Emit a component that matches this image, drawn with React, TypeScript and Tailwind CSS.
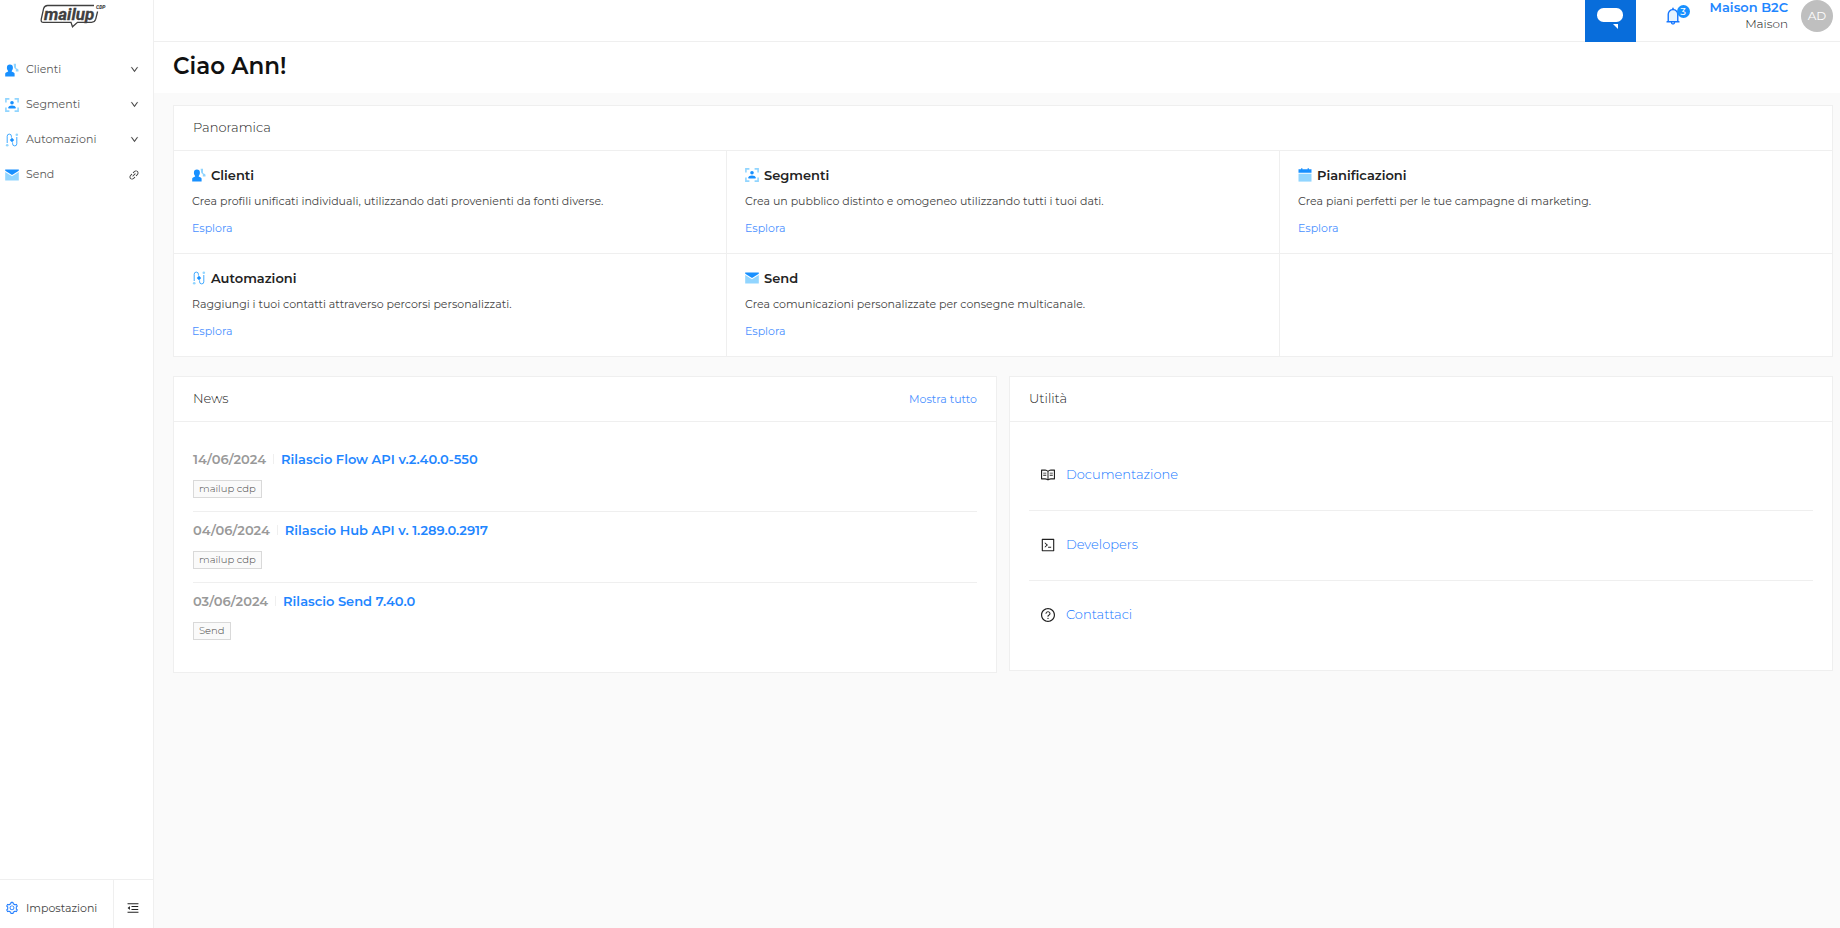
import type { ReactNode } from 'react';
import {
  AiOutlineCode,
  AiOutlineDown,
  AiOutlineLink,
  AiOutlineMenuFold,
  AiOutlineQuestionCircle,
  AiOutlineRead,
  AiOutlineSetting,
  AiTwotoneBell,
} from 'react-icons/ai';

const ClientiIcon = () => (
  <svg viewBox="0 0 14 14" className="w-3.5 h-3.5 shrink-0">
    <path d="M8.6 .8H11v3.6c0 .6.3 1 .8 1.2l1 .3c.5.2.7.5.7 1V8.600h-2.700V6.200L9.300 5z" fill="#91d5ff" />
    <path d="M4.900 1.600a3 3.200 0 0 1 3 3.200c0 1.400-.5 2.500-1.200 3.100v.7l2 .8c.6.200.9.7.9 1.300v2.800H.2v-2.800c0-.6.3-1.100.9-1.300l2-.8v-.7c-.7-.6-1.200-1.700-1.200-3.100a3 3.200 0 0 1 3-3.200z" fill="#1890ff" />
  </svg>
);

const SegmentiIcon = () => (
  <svg viewBox="0 0 14 14" className="w-3.5 h-3.5 shrink-0">
    <path d="M.9 4.400V.9h3.500M9.600.9h3.500v3.500M13.100 9.600v3.500H9.600M4.400 13.100H.9V9.600" fill="none" stroke="#91d5ff" strokeWidth="1.600" />
    <circle cx="7" cy="4.800" r="1.800" fill="#1890ff" />
    <path d="M3.400 10.400V9.300c0-1 1.600-1.900 3.600-1.900s3.600.9 3.600 1.900v1.100z" fill="#1890ff" />
  </svg>
);

const AutomazioniIcon = () => (
  <svg viewBox="0 0 14 14" className="w-3.5 h-3.5 shrink-0">
    <path d="M2.200 10V3.200a2.100 2.100 0 0 1 4.200 0V4.600" fill="none" stroke="#40a9ff" strokeWidth="1" />
    <path d="M11.800 4v6.800a2.100 2.100 0 0 1-4.200 0V9.400" fill="none" stroke="#40a9ff" strokeWidth="1" />
    <path d="M7 4.800 9.200 7 7 9.200 4.800 7z" fill="#1890ff" />
    <circle cx="2.200" cy="12.200" r="1.300" fill="#91d5ff" />
    <circle cx="11.800" cy="1.800" r="1.300" fill="#91d5ff" />
  </svg>
);

const SendIcon = () => (
  <svg viewBox="0 0 14 14" className="w-3.5 h-3.5 shrink-0">
    <path d="M.2 4 7 8.200l6.800-4.200v8.600H.2z" fill="#91d5ff" />
    <path d="M.2 1.400h13.600v1.300L7 6.900.2 2.700z" fill="#1890ff" />
  </svg>
);

const PianificazioniIcon = () => (
  <svg viewBox="0 0 14 14" className="w-3.5 h-3.5 shrink-0">
    <path d="M.5 1.300h2.600V.3h1.300v1h5.200v-1h1.300v1h2.600v3.400H.5z" fill="#1890ff" />
    <path d="M.5 5.700h13v7.900H.5z" fill="#91d5ff" />
  </svg>
);

const Logo = () => (
  <svg viewBox="0 0 70 26" className="w-[70px] h-[26px]" aria-label="mailup cdp">
    <path
      d="M56 2.500H9.500C7 2.500 6.200 3.600 5.600 5.600L3.300 16C2.800 18.300 3.400 19.300 5.600 19.300H33L34.500 23.800L39.500 19.300H53.500C56 19.300 57.100 18.400 57.700 16.200L59.600 8.500"
      fill="none"
      stroke="#404040"
      strokeWidth="1.3"
    />
    <text x="6" y="17" fill="#404040" stroke="#404040" strokeWidth="0.3" className="font-['Roboto',sans-serif] text-[17px] font-bold italic">
      mailup
    </text>
    <text x="58" y="6" fill="#404040" className="font-['Roboto',sans-serif] text-[5px] font-black italic">
      CDP
    </text>
  </svg>
);

const menu = [
  { label: 'Clienti', icon: <ClientiIcon /> },
  { label: 'Segmenti', icon: <SegmentiIcon /> },
  { label: 'Automazioni', icon: <AutomazioniIcon /> },
  { label: 'Send', icon: <SendIcon />, external: true },
];

const features = [
  { title: 'Clienti', icon: <ClientiIcon />, text: 'Crea profili unificati individuali, utilizzando dati provenienti da fonti diverse.' },
  { title: 'Segmenti', icon: <SegmentiIcon />, text: 'Crea un pubblico distinto e omogeneo utilizzando tutti i tuoi dati.' },
  { title: 'Pianificazioni', icon: <PianificazioniIcon />, text: 'Crea piani perfetti per le tue campagne di marketing.' },
  { title: 'Automazioni', icon: <AutomazioniIcon />, text: 'Raggiungi i tuoi contatti attraverso percorsi personalizzati.' },
  { title: 'Send', icon: <SendIcon />, text: 'Crea comunicazioni personalizzate per consegne multicanale.' },
];

const news = [
  { date: '14/06/2024', title: 'Rilascio Flow API v.2.40.0-550', tag: 'mailup cdp' },
  { date: '04/06/2024', title: 'Rilascio Hub API v. 1.289.0.2917', tag: 'mailup cdp' },
  { date: '03/06/2024', title: 'Rilascio Send 7.40.0', tag: 'Send' },
];

const links = [
  { label: 'Documentazione', icon: <AiOutlineRead /> },
  { label: 'Developers', icon: <AiOutlineCode /> },
  { label: 'Contattaci', icon: <AiOutlineQuestionCircle /> },
];

const Card = ({ title, extra, children }: { title: string; extra?: ReactNode; children: ReactNode }) => (
  <section className="bg-white border border-[#efefef]">
    <div className="flex items-center justify-between h-[45px] px-[19px] border-b border-[#efefef]">
      <h2 className="text-[13px] font-light text-[#222]">{title}</h2>
      {extra}
    </div>
    {children}
  </section>
);

const Sidebar = () => (
  <aside className="flex flex-col w-[154px] shrink-0 bg-white border-r border-[#efefef]">
    <a href="#" className="flex justify-center pt-[3px] mr-2">
      <Logo />
    </a>
    <nav className="flex flex-col pt-[23px]">
      {menu.map((item) => (
        <button key={item.label} className="flex items-center h-[35px] pl-[5px] pr-3 text-[11px] text-[#595959]">
          {item.icon}
          <span className="ml-[7px] flex-1 text-left">{item.label}</span>
          <span className="flex justify-center w-3.5 text-[#333]">
            {item.external ? (
              <AiOutlineLink className="w-3 h-3" />
            ) : (
              <AiOutlineDown className="w-[9px] h-[9px]" stroke="currentColor" strokeWidth="30" />
            )}
          </span>
        </button>
      ))}
    </nav>
    <div className="flex h-[49px] mt-auto border-t border-[#efefef]">
      <button className="flex flex-1 items-center pl-[5px] pt-2 text-[11px] text-[#444]">
        <AiOutlineSetting className="w-3.5 h-3.5 text-[#1677ff]" />
        <span className="ml-[7px]">Impostazioni</span>
      </button>
      <button aria-label="Comprimi menu" className="flex w-10 items-center justify-center pt-2 pr-0.5 border-l border-[#efefef]">
        <AiOutlineMenuFold className="w-3.5 h-3.5 text-[#222]" />
      </button>
    </div>
  </aside>
);

const Header = () => (
  <header className="flex justify-end h-[42px] pr-[7px] bg-white border-b border-[#efefef]">
    <button aria-label="Chat" className="flex justify-center w-[51px] h-[42px] pt-2 bg-[#086ddb]">
      <svg viewBox="0 0 26 22" className="w-[26px] h-[22px]">
        <rect width="26" height="14" rx="6.500" fill="#fff" />
        <path d="M16 16h5v5z" fill="#fff" />
      </svg>
    </button>
    <button aria-label="Notifiche" className="relative flex w-[27px] h-8 pt-1.5 ml-[27px]">
      <AiTwotoneBell className="w-5 h-5 text-[#1677ff] [&>path[fill]]:fill-[#e6f4ff]" />
      <span className="absolute top-[5px] right-0 flex items-center justify-center w-[13px] h-[13px] rounded-full bg-[#1890ff] text-[10px] font-medium text-white">
        3
      </span>
    </button>
    <div className="ml-5 text-right">
      <div className="text-[13px] leading-[14px] font-semibold text-[#1f86ff]">Maison B2C</div>
      <div className="text-xs leading-5 font-light text-[#111]">Maison</div>
    </div>
    <div className="flex items-center justify-center w-8 h-8 ml-[13px] rounded-full bg-[#bfbfbf] text-xs text-white">AD</div>
  </header>
);

const App = () => {
  return (
    <div className="flex min-h-screen bg-[#fafafa] font-['Montserrat','Inter',sans-serif]">
      <Sidebar />
      <div className="flex flex-col flex-1 min-w-0">
        <Header />
        <div className="h-[51px] pl-[19px] bg-white">
          <h1 className="pt-1 text-[23px] leading-10 font-semibold text-[#111]">Ciao Ann!</h1>
        </div>
        <main className="flex flex-col gap-[19px] pt-3 pl-[19px] pr-[7px]">
          <Card title="Panoramica">
            <div className="grid grid-cols-3 gap-px bg-[#efefef]">
              {features.map((f) => (
                <div key={f.title} className="h-[102px] px-[18px] pt-[15px] bg-white">
                  <div className="flex items-center gap-[5px]">
                    {f.icon}
                    <h3 className="text-[13px] leading-[18px] font-semibold text-[#222]">{f.title}</h3>
                  </div>
                  <p className="mt-2 text-[11px] leading-[18px] text-[#444]">{f.text}</p>
                  <a href="#" className="block mt-[9px] text-[11px] leading-[18px] text-[#4a90ff]">
                    Esplora
                  </a>
                </div>
              ))}
              <div className="bg-white" />
            </div>
          </Card>

          <div className="grid grid-cols-2 items-start gap-3">
            <Card title="News" extra={<a href="#" className="text-[11px] text-[#4a90ff]">Mostra tutto</a>}>
              <ul className="mx-[19px] pt-[19px] pb-[18px] divide-y divide-[#efefef]">
                {news.map((n) => (
                  <li key={n.date} className="h-[71px] pt-[9px]">
                    <div className="flex items-center text-[13px] leading-[18px] font-semibold">
                      <span className="text-[#999]">{n.date}</span>
                      <span className="w-px h-2.5 mx-[7px] bg-[#efefef]" />
                      <a href="#" className="text-[#1f86ff]">{n.title}</a>
                    </div>
                    <span className="inline-block mt-3 px-[5px] border border-[#d9d9d9] bg-[#fafafa] text-[10px] leading-4 font-light text-[#444]">
                      {n.tag}
                    </span>
                  </li>
                ))}
              </ul>
            </Card>
            <Card title="Utilità">
              <ul className="mx-[19px] py-[19px] divide-y divide-[#efefef]">
                {links.map((l) => (
                  <li key={l.label} className="flex items-center h-[70px] pl-[11px] pb-0.5 text-base text-[#222]">
                    {l.icon}
                    <a href="#" className="ml-2.5 text-[13px] font-light text-[#1677ff]">{l.label}</a>
                  </li>
                ))}
              </ul>
            </Card>
          </div>
        </main>
      </div>
    </div>
  );
};

export default App;
